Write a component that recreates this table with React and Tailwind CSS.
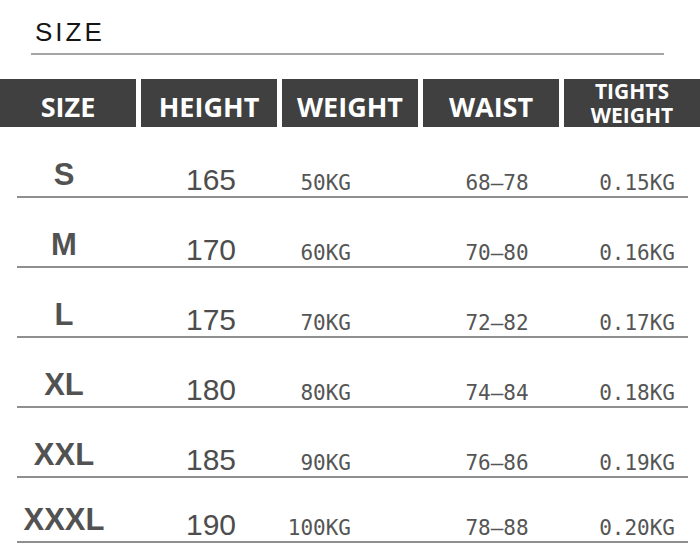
import React from 'react';

const rows = [
  { size: 'S', height: '165', weight: '50KG', waist: '68–78', tights: '0.15KG' },
  { size: 'M', height: '170', weight: '60KG', waist: '70–80', tights: '0.16KG' },
  { size: 'L', height: '175', weight: '70KG', waist: '72–82', tights: '0.17KG' },
  { size: 'XL', height: '180', weight: '80KG', waist: '74–84', tights: '0.18KG' },
  { size: 'XXL', height: '185', weight: '90KG', waist: '76–86', tights: '0.19KG' },
  { size: 'XXXL', height: '190', weight: '100KG', waist: '78–88', tights: '0.20KG' },
];

const headers = ['SIZE', 'HEIGHT', 'WEIGHT', 'WAIST'];

function HeaderCell({ children }) {
  return (
    <div className="w-[136px] h-[48px] bg-[#404040] text-white font-bold text-[27px] leading-none text-center pt-[14px] overflow-hidden">
      {children}
    </div>
  );
}

export default function App() {
  return (
    <div className="w-[700px] h-[554px] bg-white overflow-hidden" style={{ fontFamily: '"Liberation Sans", Arial, sans-serif' }}>
      {/* Title */}
      <div className="pt-[18px] ml-[31px] w-[633px] border-b-2 border-[#a5a5a5] pb-[5px]">
        <span className="pl-[4px] text-[26px] leading-[28px] tracking-[3px] text-[#151515]">SIZE</span>
      </div>

      {/* Header bar */}
      <div className="mt-[24px] flex gap-[5px]" style={{ fontFamily: '"Open Sans", sans-serif' }}>
        {headers.map((h) => (
          <HeaderCell key={h}>{h}</HeaderCell>
        ))}
        <div className="w-[136px] h-[48px] bg-[#404040] text-white font-bold text-[21px] leading-[24px] text-center overflow-hidden">
          <div>TIGHTS</div>
          <div>WEIGHT</div>
        </div>
      </div>

      {/* Rows */}
      <div className="mt-[1px]">
        {rows.map((r, i) => (
          <div
            key={r.size}
            className={`ml-[17px] w-[671px] flex items-end border-b-2 border-[#8f8f8f] pb-[3px] ${i === rows.length - 1 ? 'h-[65px]' : 'h-[70px]'}`}
          >
            <div className="w-[94px] text-center font-bold text-[31px] leading-none text-[#525252] mb-[3px]">
              {r.size}
            </div>
            <div className="ml-[30px] w-[140px] text-center text-[30px] leading-none text-[#4d4d4d] mb-[-2px]">
              {r.height}
            </div>
            <div className="w-[70px] text-right text-[21px] leading-none text-[#555] mb-[-1px]" style={{ fontFamily: '"DejaVu Sans Mono", monospace' }}>
              {r.weight}
            </div>
            <div className="ml-[86px] w-[120px] text-center text-[21px] leading-none text-[#555] mb-[-1px]" style={{ fontFamily: '"DejaVu Sans Mono", monospace' }}>
              {r.waist}
            </div>
            <div className="ml-auto pr-[13px] text-[21px] leading-none text-[#555] mb-[-1px]" style={{ fontFamily: '"DejaVu Sans Mono", monospace' }}>
              {r.tights}
            </div>
          </div>
        ))}
      </div>
    </div>
  );
}
